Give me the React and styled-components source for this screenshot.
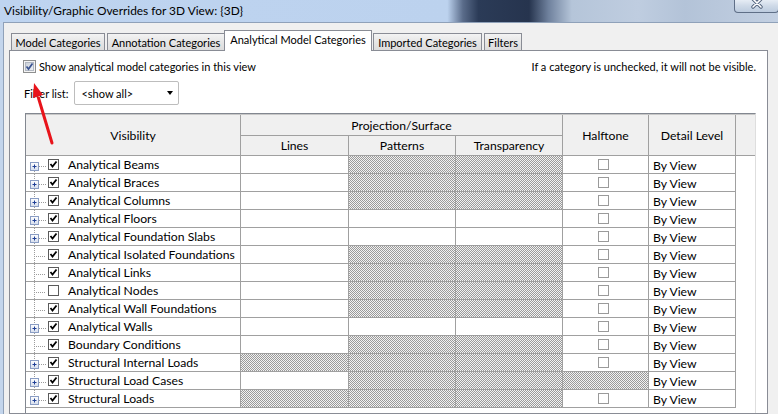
import React from "react";
import styled, { createGlobalStyle } from "styled-components";

const GlobalStyle = createGlobalStyle`
  *, *::before, *::after { box-sizing: border-box; }
  html, body { margin: 0; padding: 0; background: #f0f0f0; }
  body { font-family: "Lato", "Liberation Sans", sans-serif; color: #000; }
`;

const HATCH = "repeating-conic-gradient(#9a9a9a 0% 25%, #f2f2f2 0% 50%) 0 0 / 2px 2px";
const GRID = "#a0a0a0";
const COLS = "215px 108px 107px 107px 86px 87px";

const categories = [
  { name: "Analytical Beams", tree: true, on: true, hatch: [0, 1, 1] },
  { name: "Analytical Braces", tree: true, on: true, hatch: [0, 1, 1] },
  { name: "Analytical Columns", tree: true, on: true, hatch: [0, 1, 1] },
  { name: "Analytical Floors", tree: true, on: true, hatch: [0, 0, 0] },
  { name: "Analytical Foundation Slabs", tree: true, on: true, hatch: [0, 0, 0] },
  { name: "Analytical Isolated Foundations", tree: false, on: true, hatch: [0, 1, 1] },
  { name: "Analytical Links", tree: false, on: true, hatch: [0, 1, 1] },
  { name: "Analytical Nodes", tree: false, on: false, hatch: [0, 1, 1] },
  { name: "Analytical Wall Foundations", tree: false, on: true, hatch: [0, 1, 1] },
  { name: "Analytical Walls", tree: true, on: true, hatch: [0, 0, 0] },
  { name: "Boundary Conditions", tree: false, on: true, hatch: [0, 1, 1] },
  { name: "Structural Internal Loads", tree: true, on: true, hatch: [1, 1, 1] },
  { name: "Structural Load Cases", tree: true, on: true, hatch: [0, 1, 1], halftoneHatch: true },
  { name: "Structural Loads", tree: true, on: true, hatch: [1, 1, 1] },
];

const tabs = [
  { label: "Model Categories", w: 94 },
  { label: "Annotation Categories", w: 118 },
  { label: "Analytical Model Categories", w: 148, active: true },
  { label: "Imported Categories", w: 109 },
  { label: "Filters", w: 38 },
];

/* ---------- window chrome ---------- */

const Window = styled.div`
  position: relative;
  width: 778px;
  height: 414px;
  overflow: hidden;
  display: flex;
  flex-direction: column;
  background: #c3d5ec;
`;

const TitleBar = styled.div`
  height: 22px;
  flex: none;
  display: flex;
  align-items: flex-start;
  background: linear-gradient(
    90deg,
    #bed4f0 0%,
    #bcd2ee 57.5%,
    #5a6c8a 59.5%,
    #2b3b57 61.5%,
    #26344e 68%,
    #6f819d 70.5%,
    #b5c5d9 73.5%,
    #bfcde0 82%,
    #b3c3d8 88%,
    #c3d0e2 100%
  );
`;

const Title = styled.span`
  padding: 4px 0 0 4px;
  font-size: 11.9px;
  line-height: 14px;
  color: #000;
`;

const CloseButton = styled.div`
  margin-left: auto;
  margin-right: -1px;
  margin-top: -2px;
  width: 45px;
  height: 15px;
  border: 1px solid #5f6f87;
  border-top: none;
  border-radius: 0 0 4px 4px;
  background: linear-gradient(#eef3f9, #cfdae8 55%, #bccbde);
  display: flex;
  justify-content: center;
  align-items: flex-start;
  padding-top: 1px;
`;

const Client = styled.div`
  flex: 1;
  margin-left: 3px;
  border-left: 1px solid #8fa1b9;
  border-top: 1px solid #8fa1b9;
  background: #f0f0f0;
  padding: 7px 0 0 5px;
  display: flex;
  flex-direction: column;
`;

/* ---------- tabs ---------- */

const TabStrip = styled.div`
  display: flex;
  align-items: flex-end;
  height: 21px;
  padding-left: 2px;
  margin-bottom: -1px;
  position: relative;
  z-index: 1;
`;

const Tab = styled.div`
  width: ${(p) => p.$w}px;
  height: ${(p) => (p.$active ? 21 : 18)}px;
  margin-left: ${(p) => (p.$active ? -1 : 2)}px;
  margin-right: ${(p) => (p.$active ? -1 : 0)}px;
  border: 1px solid #898c95;
  border-bottom: ${(p) => (p.$active ? "none" : "1px solid #898c95")};
  background: ${(p) => (p.$active ? "#fff" : "linear-gradient(#f3f3f3, #e6e6e6 50%, #dcdcdc)")};
  display: flex;
  justify-content: center;
  align-items: ${(p) => (p.$active ? "flex-start" : "center")};
  padding-top: ${(p) => (p.$active ? 2 : 0)}px;
  font-size: 11px;
  white-space: nowrap;
  position: relative;
  z-index: ${(p) => (p.$active ? 2 : 1)};

  &:first-child {
    margin-left: 0;
  }
`;

const Panel = styled.div`
  width: 759px;
  flex: 1;
  border: 1px solid #898c95;
  background: #fff;
  display: flex;
  flex-direction: column;
`;

/* ---------- options ---------- */

const OptionRow = styled.div`
  display: flex;
  align-items: center;
  height: 14px;
  margin-top: 8px;
  padding: 0 11px 0 13px;
  font-size: 11px;
`;

const OptionLabel = styled.span`
  margin-left: 3px;
`;

const Hint = styled.span`
  margin-left: auto;
`;

const FilterRow = styled.div`
  display: flex;
  align-items: center;
  margin-top: 8px;
  padding-left: 14px;
  font-size: 11px;
`;

const Combo = styled.div`
  width: 105px;
  height: 24px;
  margin-left: 6px;
  border: 1px solid #bdbdbd;
  border-radius: 2px;
  background: #fff;
  display: flex;
  align-items: center;
  justify-content: space-between;
  padding: 0 5px 0 6px;
`;

const ComboArrow = styled.span`
  width: 0;
  height: 0;
  border-left: 3.5px solid transparent;
  border-right: 3.5px solid transparent;
  border-top: 4px solid #000;
`;

/* ---------- table ---------- */

const TableBox = styled.div`
  margin: 8px 0 0 15px;
  width: 731px;
  flex: 1;
  border-left: 1px solid #828790;
  border-top: 1px solid #828790;
  border-right: 1px solid #dedede;
  background: #fff;
  font-size: 12.2px;
`;

const Header = styled.div`
  display: grid;
  grid-template-columns: ${COLS} 19px;
  grid-template-rows: 21px 20px;
  border-top: 1px solid #c8c8c8;
`;

const HeadCell = styled.div`
  grid-column: ${(p) => p.$col};
  grid-row: ${(p) => p.$row};
  background: #f0f0f0;
  border-bottom: 1px solid ${GRID};
  border-right: ${(p) => (p.$last ? "none" : `1px solid ${GRID}`)};
  display: flex;
  align-items: center;
  justify-content: center;
  color: #000;
`;

const Row = styled.div`
  display: grid;
  grid-template-columns: ${COLS};
  height: 18px;
`;

const Cell = styled.div`
  border-right: 1px solid ${GRID};
  border-bottom: 1px solid ${GRID};
  background: ${(p) => (p.$hatch ? HATCH : "#fff")};
  display: flex;
  align-items: center;
  justify-content: ${(p) => (p.$center ? "center" : "flex-start")};
  padding-left: ${(p) => p.$pad || 0}px;
  padding-right: ${(p) => (p.$center ? 4 : 0)}px;
  white-space: nowrap;
`;

const CheckSlot = styled.span`
  display: flex;
  margin-left: 2px;
`;

const Name = styled.span`
  margin-left: 9px;
`;

const Level = styled.span`
  padding-top: 1px;
`;

/* ---------- drawn bits ---------- */

const Overlay = styled.svg`
  position: absolute;
  left: 0;
  top: 0;
  pointer-events: none;
`;

const CloseGlyph = () => (
  <svg width="14" height="10" viewBox="0 0 14 10">
    <path d="M3 0 L11 8 M11 0 L3 8" stroke="#50607a" strokeWidth="3.4" strokeLinecap="round" />
    <path d="M3 0 L11 8 M11 0 L3 8" stroke="#fff" strokeWidth="1.6" strokeLinecap="round" />
  </svg>
);

const AeroCheck = () => (
  <svg width="13" height="13" viewBox="0 0 13 13">
    <defs>
      <linearGradient id="ck" x1="0" y1="0" x2="1" y2="1">
        <stop offset="0" stopColor="#c9cfd8" />
        <stop offset="1" stopColor="#eef1f5" />
      </linearGradient>
    </defs>
    <rect x="0.5" y="0.5" width="12" height="12" fill="#f4f4f4" stroke="#8e8f8f" />
    <rect x="2.5" y="2.5" width="8" height="8" fill="url(#ck)" stroke="#b2b8c2" />
    <path d="M3.5 6.5 L5.5 9 L9.5 3.5" fill="none" stroke="#3a5391" strokeWidth="1.7" />
  </svg>
);

const GridCheck = ({ on, light }) => (
  <svg width="11" height="11" viewBox="0 0 11 11">
    <rect x="0.5" y="0.5" width="10" height="10" fill="#fff" stroke={light ? "#9a9a9a" : "#5b5b5b"} />
    {on && <path d="M2.5 5 L4.5 7.5 L8.5 2.5" fill="none" stroke="#000" strokeWidth="1.8" />}
  </svg>
);

const TreeGlyph = ({ expander, first, last }) => (
  <svg width="16" height="17" viewBox="0 0 16 17">
    <g stroke="#9c9c9c" strokeDasharray="1 1" fill="none">
      {expander ? (
        <>
          {!first && <path d="M4.5 0 V6" />}
          {!last && <path d="M4.5 15 V17" />}
          <path d="M9 10.5 H16" />
        </>
      ) : (
        <>
          <path d="M4.5 0 V17" />
          <path d="M6 10.5 H16" />
        </>
      )}
    </g>
    {expander && (
      <>
        <defs>
          <linearGradient id="ex" x1="0" y1="0" x2="0" y2="1">
            <stop offset="0" stopColor="#ffffff" />
            <stop offset="1" stopColor="#d6deed" />
          </linearGradient>
        </defs>
        <rect x="0.5" y="6.5" width="8" height="8" fill="url(#ex)" stroke="#8a9dc4" />
        <path d="M2.5 10.5 H6.5 M4.5 8.5 V12.5" stroke="#1f3f96" />
      </>
    )}
  </svg>
);

const Arrow = () => (
  <Overlay width="778" height="414" viewBox="0 0 778 414">
    <path d="M52 143 L38.5 98" stroke="#e8141b" strokeWidth="3" strokeLinecap="round" />
    <polygon points="34,83 43,95 33,98" fill="#e8141b" />
  </Overlay>
);

export default function App() {
  return (
    <>
      <GlobalStyle />
      <Window>
        <TitleBar>
          <Title>Visibility/Graphic Overrides for 3D View: {"{3D}"}</Title>
          <CloseButton>
            <CloseGlyph />
          </CloseButton>
        </TitleBar>

        <Client>
          <TabStrip>
            {tabs.map((t) => (
              <Tab key={t.label} $w={t.w} $active={t.active}>
                {t.label}
              </Tab>
            ))}
          </TabStrip>

          <Panel>
            <OptionRow>
              <AeroCheck />
              <OptionLabel>Show analytical model categories in this view</OptionLabel>
              <Hint>If a category is unchecked, it will not be visible.</Hint>
            </OptionRow>

            <FilterRow>
              Filter list:
              <Combo>
                &lt;show all&gt;
                <ComboArrow />
              </Combo>
            </FilterRow>

            <TableBox>
              <Header>
                <HeadCell $col="1" $row="1 / 3">Visibility</HeadCell>
                <HeadCell $col="2 / 5" $row="1">Projection/Surface</HeadCell>
                <HeadCell $col="2" $row="2">Lines</HeadCell>
                <HeadCell $col="3" $row="2">Patterns</HeadCell>
                <HeadCell $col="4" $row="2">Transparency</HeadCell>
                <HeadCell $col="5" $row="1 / 3">Halftone</HeadCell>
                <HeadCell $col="6" $row="1 / 3">Detail Level</HeadCell>
                <HeadCell $col="7" $row="1 / 3" $last />
              </Header>

              {categories.map((c, i) => (
                <Row key={c.name}>
                  <Cell $pad={4}>
                    <TreeGlyph expander={c.tree} first={i === 0} last={i === categories.length - 1} />
                    <CheckSlot>
                      <GridCheck on={c.on} />
                    </CheckSlot>
                    <Name>{c.name}</Name>
                  </Cell>
                  {c.hatch.map((h, k) => (
                    <Cell key={k} $hatch={h} />
                  ))}
                  <Cell $center $hatch={c.halftoneHatch}>
                    {!c.halftoneHatch && <GridCheck light />}
                  </Cell>
                  <Cell $pad={4}>
                    <Level>By View</Level>
                  </Cell>
                </Row>
              ))}
            </TableBox>
          </Panel>
        </Client>

        <Arrow />
      </Window>
    </>
  );
}
